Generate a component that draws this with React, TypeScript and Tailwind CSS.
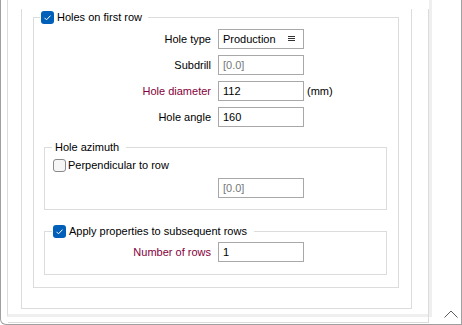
import React from 'react'

const font = { fontFamily: '"Liberation Sans", Arial, sans-serif' }

function CheckBox({ checked }: { checked?: boolean }) {
  if (checked) {
    return (
      <span className="w-[13px] h-[13px] rounded-[3px] bg-[#005fb8] flex items-center justify-center shrink-0">
        <svg width="13" height="13" viewBox="0 0 13 13">
          <polyline points="3.5,6.8 5.5,8.8 9.5,4.6" fill="none" stroke="#fff" strokeWidth="1" />
        </svg>
      </span>
    )
  }
  return <span className="w-[13px] h-[13px] rounded-[3px] border border-[#8a8a8a] bg-[#f6f6f6] shrink-0" />
}

function Field({ value, muted, children }: { value: string; muted?: boolean; children?: React.ReactNode }) {
  return (
    <div className="w-[86px] h-[20px] border border-[#a8a8a8] bg-white flex items-center pl-[4px] pr-[8px]">
      <span className={muted ? 'flex-1 text-[#777]' : 'flex-1 text-black'}>{value}</span>
      {children}
    </div>
  )
}

function Row({
  label,
  labelWidth,
  red,
  value,
  muted,
  suffix,
  children,
}: {
  label: string
  labelWidth: string
  red?: boolean
  value: string
  muted?: boolean
  suffix?: string
  children?: React.ReactNode
}) {
  return (
    <div className="flex items-center h-[20px]">
      <span className={`${labelWidth} text-right ${red ? 'text-[#85003c]' : 'text-black'}`}>{label}</span>
      <div className="ml-[7px]">
        <Field value={value} muted={muted}>{children}</Field>
      </div>
      {suffix && <span className="ml-[3px]">{suffix}</span>}
    </div>
  )
}

export default function App() {
  return (
    <div className="w-[462px] h-[325px] bg-white text-[11px] leading-4 text-black" style={font}>
      <div className="h-[325px] border-l border-r border-b border-[#a0a0a0] rounded-bl-[6px] flex">
        <div className="ml-[6px] w-[425px] h-[317px] border-l border-r-[3px] border-b-[3px] border-l-[#dcdcdc] border-r-[#efefef] border-b-[#efefef]">
          <div className="h-full border-r border-b border-[#dcdcdc]">
            <div className="ml-[13px] w-[391px] h-[300px] border-l border-r border-b border-[#dcdcdc]">
              <fieldset className="ml-[11px] mt-[9px] w-[366px] border border-[#dcdcdc] pb-[12px]">
                <legend className="ml-[6px] pl-[1px] pr-[6px]">
                  <span className="flex items-center gap-[3px] h-4">
                    <CheckBox checked />
                    <span>Holes on first row</span>
                  </span>
                </legend>
                <div className="mt-[4px] flex flex-col gap-[6px]">
                  <Row label="Hole type" labelWidth="w-[177px]" value="Production">
                    <svg width="7" height="6" viewBox="0 0 7 6" className="shrink-0">
                      <path d="M0 0.5H7M0 2.5H7M0 4.5H7" stroke="#333" strokeWidth="1" />
                    </svg>
                  </Row>
                  <Row label="Subdrill" labelWidth="w-[177px]" value="[0.0]" muted />
                  <Row label="Hole diameter" labelWidth="w-[177px]" value="112" red suffix="(mm)" />
                  <Row label="Hole angle" labelWidth="w-[177px]" value="160" />
                </div>

                <fieldset className="ml-[10px] mt-[12px] w-[343px] border border-[#dcdcdc] pb-[11px]">
                  <legend className="ml-[7px] pl-[3px] pr-[7px] h-4">Hole azimuth</legend>
                  <div className="mt-[2px] ml-[8px] flex items-center gap-[2px] h-4">
                    <CheckBox />
                    <span>Perpendicular to row</span>
                  </div>
                  <div className="mt-[5px] ml-[173px]">
                    <Field value="[0.0]" muted />
                  </div>
                </fieldset>

                <fieldset className="ml-[10px] mt-[13px] w-[343px] border border-[#dcdcdc] pb-[12px]">
                  <legend className="ml-[7px] pl-[1px] pr-[7px]">
                    <span className="flex items-center gap-[3px] h-4">
                      <CheckBox checked />
                      <span>Apply properties to subsequent rows</span>
                    </span>
                  </legend>
                  <div className="mt-[3px]">
                    <Row label="Number of rows" labelWidth="w-[166px]" value="1" red />
                  </div>
                </fieldset>
              </fieldset>
            </div>
          </div>
        </div>
        <div className="flex-1 flex items-end justify-end pr-[3px] pb-[6px]">
          <svg width="14" height="8" viewBox="0 0 14 8">
            <polyline points="0.5,7.5 7,1 13.5,7.5" fill="none" stroke="#5c5c5c" strokeWidth="1" />
          </svg>
        </div>
      </div>
    </div>
  )
}
